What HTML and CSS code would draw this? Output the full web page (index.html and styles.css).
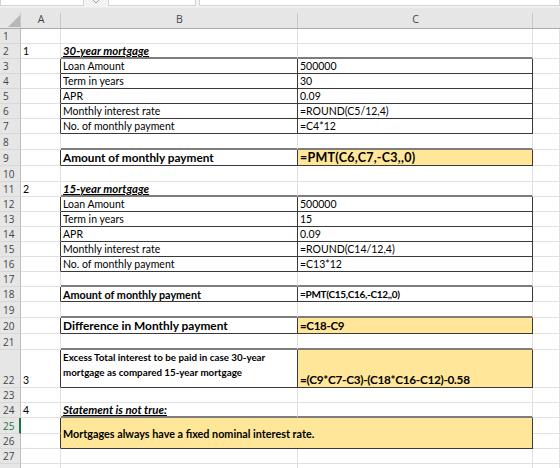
FILE: index.html
```html
<!DOCTYPE html>
<html>
<head>
<meta charset="utf-8">
<link rel="stylesheet" href="styles.css">
</head>
<body>
<div class="fbar">
  <div class="fbox name"></div>
  <div class="fsep"><svg width="8" height="4" viewBox="0 0 8 4"><polyline points="1,0 4,3 7,0" fill="none" stroke="#a0a0a0" stroke-width="1"/></svg></div>
  <div class="fbox mid"></div>
  <div class="fbox formula"></div>
</div>
<div class="sheet">
  <div class="ch corner"><svg width="12" height="12" viewBox="0 0 12 12"><polygon points="12,0 12,12 0,12" fill="#b7b7b7"/></svg></div>
  <div class="ch">A</div>
  <div class="ch">B</div>
  <div class="ch">C</div>
  <div class="ch last"></div>

  <div class="rh">1</div><div class="c"></div><div class="c"></div><div class="c"></div><div class="c"></div>

  <div class="rh">2</div><div class="c">1</div><div class="c hd bt">30-year mortgage</div><div class="c bt"></div><div class="c"></div>

  <div class="rh">3</div><div class="c br"></div><div class="c bb br">Loan Amount</div><div class="c bb br">500000</div><div class="c"></div>
  <div class="rh">4</div><div class="c br"></div><div class="c bb br">Term in years</div><div class="c bb br">30</div><div class="c"></div>
  <div class="rh">5</div><div class="c br"></div><div class="c bb br">APR</div><div class="c bb br">0.09</div><div class="c"></div>
  <div class="rh">6</div><div class="c br"></div><div class="c bb br">Monthly interest rate</div><div class="c bb br">=ROUND(C5/12,4)</div><div class="c"></div>
  <div class="rh">7</div><div class="c br"></div><div class="c bb br">No. of monthly payment</div><div class="c bb br">=C4*12</div><div class="c"></div>

  <div class="rh">8</div><div class="c"></div><div class="c bt"></div><div class="c bt"></div><div class="c"></div>

  <div class="rh">9</div><div class="c br"></div><div class="c bb br t-amount">Amount of monthly payment</div><div class="c bb br yel t-pmt">=PMT(C6,C7,-C3,,0)</div><div class="c"></div>

  <div class="rh">10</div><div class="c"></div><div class="c"></div><div class="c"></div><div class="c"></div>

  <div class="rh">11</div><div class="c">2</div><div class="c hd bt">15-year mortgage</div><div class="c bt"></div><div class="c"></div>

  <div class="rh">12</div><div class="c br"></div><div class="c bb br">Loan Amount</div><div class="c bb br">500000</div><div class="c"></div>
  <div class="rh">13</div><div class="c br"></div><div class="c bb br">Term in years</div><div class="c bb br">15</div><div class="c"></div>
  <div class="rh">14</div><div class="c br"></div><div class="c bb br">APR</div><div class="c bb br">0.09</div><div class="c"></div>
  <div class="rh">15</div><div class="c br"></div><div class="c bb br">Monthly interest rate</div><div class="c bb br">=ROUND(C14/12,4)</div><div class="c"></div>
  <div class="rh">16</div><div class="c br"></div><div class="c bb br">No. of monthly payment</div><div class="c bb br">=C13*12</div><div class="c"></div>

  <div class="rh">17</div><div class="c"></div><div class="c bt"></div><div class="c bt"></div><div class="c"></div>

  <div class="rh">18</div><div class="c br"></div><div class="c bb br t-amount-s">Amount of monthly payment</div><div class="c bb br t-pmt-s">=PMT(C15,C16,-C12,,0)</div><div class="c"></div>

  <div class="rh">19</div><div class="c"></div><div class="c bt"></div><div class="c bt"></div><div class="c"></div>

  <div class="rh">20</div><div class="c br"></div><div class="c bb br t-diff">Difference in Monthly payment</div><div class="c bb br yel t-diffval">=C18-C9</div><div class="c"></div>

  <div class="rh">21</div><div class="c"></div><div class="c bt"></div><div class="c bt"></div><div class="c"></div>

  <div class="rh">22</div><div class="c br">3</div><div class="c bb br t-excess wrap">Excess Total interest to be paid in case 30-year mortgage as compared 15-year mortgage</div><div class="c bb br yel t-excessval">=(C9*C7-C3)-(C18*C16-C12)-0.58</div><div class="c"></div>

  <div class="rh">23</div><div class="c"></div><div class="c"></div><div class="c"></div><div class="c"></div>

  <div class="rh">24</div><div class="c">4</div><div class="c hd bt">Statement is not true:</div><div class="c bt"></div><div class="c"></div>

  <div class="rh sel">25</div><div class="c br"></div><div class="c bb br yel t-stmt merged">Mortgages always have a fixed nominal interest rate.</div><div class="c"></div>
  <div class="rh">26</div><div class="c br"></div><div class="c"></div>

  <div class="rh">27</div><div class="c"></div><div class="c"></div><div class="c"></div><div class="c"></div>
  <div class="rh"></div><div class="c"></div><div class="c"></div><div class="c"></div><div class="c"></div>
</div>
</body>
</html>
```

FILE: styles.css
```css
html, body {
  margin: 0;
  padding: 0;
  background: #ffffff;
  overflow: hidden;
}

body {
  font-family: Lato, "Liberation Sans", sans-serif;
  color: #000;
}

.fbar {
  height: 7px;
  background: #f3f3f3;
  display: flex;
  align-items: flex-start;
}

.fbox {
  height: 5px;
  background: #fff;
  border: 1px solid #d2d2d2;
  border-top: none;
}

.fbox.name {
  width: 82px;
}

.fsep {
  width: 24px;
  display: flex;
  justify-content: center;
}

.fsep svg {
  display: block;
}

.fbox.mid {
  width: 86px;
}

.fbox.formula {
  flex: 1;
  margin-left: 3px;
}

.sheet {
  display: grid;
  grid-template-columns: 21px 40px 237px 235px 1fr;
  grid-template-rows: 22px 15px 15px 15px 15px 15px 15px 15px 16px 16px 16px 15px 15px 15px 15px 15px 15px 15px 15px 16px 16px 16px 38px 15px 15px 16px 15px 15px 15px;
}

.ch {
  position: relative;
  background: #e6e6e6;
  border-bottom: 1px solid #ababab;
  border-top: 1px solid #eeeeee;
  font-family: "Open Sans", "Noto Sans", sans-serif;
  font-size: 10.5px;
  color: #444;
  display: flex;
  align-items: center;
  justify-content: center;
  padding-top: 2px;
  box-sizing: border-box;
}

.ch::after {
  content: "";
  position: absolute;
  right: 0;
  bottom: 0;
  width: 1px;
  height: 15px;
  background: #c6c6c6;
}

.ch.last::after {
  display: none;
}

.ch.corner {
  justify-content: flex-end;
  align-items: flex-end;
  padding: 0 1px 1px 0;
}

.ch.corner svg {
  display: block;
}

.rh {
  background: #e6e6e6;
  border-right: 1px solid #bdbdbd;
  border-bottom: 1px solid #d8d8d8;
  box-sizing: border-box;
  font-family: "Open Sans", "Noto Sans", sans-serif;
  font-size: 10px;
  color: #444;
  display: flex;
  align-items: flex-end;
  padding-left: 3px;
  line-height: 14px;
}

.rh.sel {
  color: #217346;
  border-right: 2px solid #217346;
}

.c {
  box-sizing: border-box;
  border-right: 1px solid #e1e1e1;
  border-bottom: 1px solid #e1e1e1;
  display: flex;
  align-items: flex-end;
  padding: 0 2px 0 2px;
  font-size: 10.5px;
  line-height: 13px;
  white-space: nowrap;
  min-width: 0;
}

.c.br {
  border-right: 1px solid #3a3a3a;
}

.c.bb {
  border-bottom: 1px solid #3a3a3a;
}

.c.bt {
  border-bottom: 2px solid #7d7d7d;
}

.c.hd {
  font-weight: bold;
  font-style: italic;
  text-decoration: underline;
  font-size: 11.4px;
}

.c.yel {
  background: #ffe699;
}

.t-amount {
  font-weight: bold;
  font-size: 11.8px;
  line-height: 14px;
}

.t-pmt {
  font-weight: bold;
  font-size: 12.5px;
  letter-spacing: 0.25px;
  line-height: 14px;
}

.t-amount-s {
  font-weight: bold;
  font-size: 10.8px;
}

.t-pmt-s {
  font-weight: bold;
  font-size: 10px;
  letter-spacing: -0.3px;
}

.t-diff {
  font-weight: bold;
  font-size: 11.9px;
  line-height: 15px;
}

.t-diffval {
  font-weight: bold;
  font-size: 11.5px;
  letter-spacing: -0.3px;
  line-height: 14px;
}

.t-excess {
  font-weight: bold;
  font-size: 9.8px;
}

.t-excessval {
  font-weight: bold;
  font-size: 11.8px;
  letter-spacing: -0.3px;
  line-height: 14px;
}

.t-stmt {
  font-weight: bold;
  font-size: 10.8px;
}

.c.wrap {
  white-space: normal;
  align-items: flex-start;
  line-height: 15px;
  padding-top: 0;
  padding-right: 8px;
}

.c.merged {
  grid-column: 3 / 5;
  grid-row: span 2;
  align-items: center;
}
```
